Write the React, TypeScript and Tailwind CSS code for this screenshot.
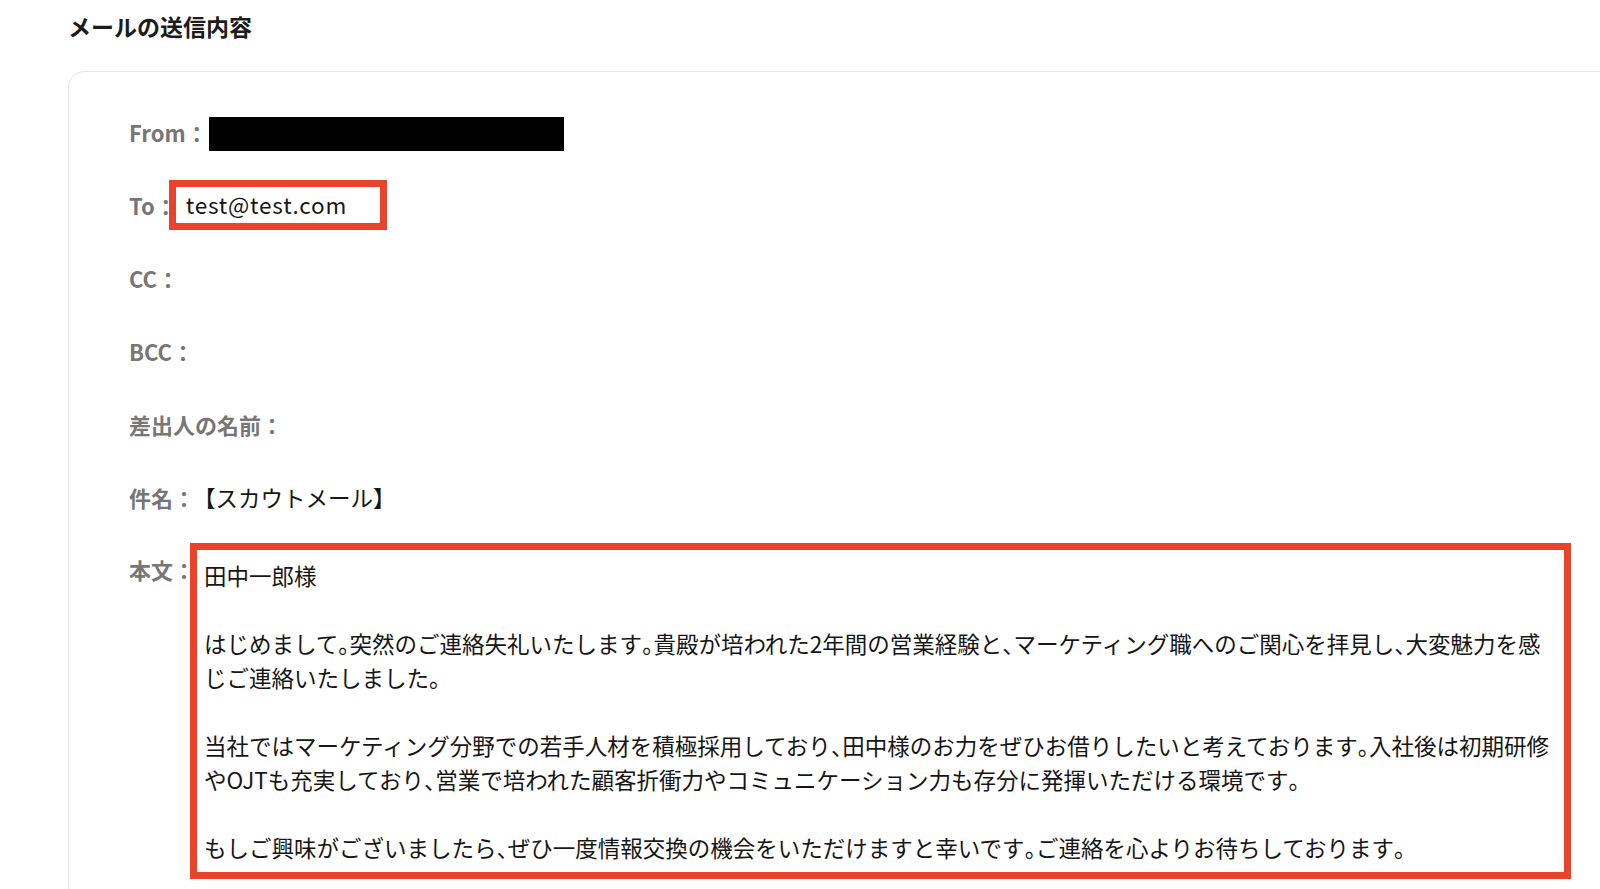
import React from "react";

function J({ t }: { t: string }) {
  const parts = t.split(/([。、])/);
  return (
    <>
      {parts.map((p, i) =>
        p === "。" || p === "、" ? (
          <span key={i} className="[font-feature-settings:'halt']">
            {p}
          </span>
        ) : (
          <React.Fragment key={i}>{p}</React.Fragment>
        )
      )}
    </>
  );
}

const labelCls =
  "text-[22px] leading-[34px] font-semibold text-[#767676] whitespace-nowrap";

export default function App() {
  return (
    <div className="h-[889px] w-full overflow-hidden bg-white pl-[68px] font-['Noto_Sans_CJK_JP','Noto_Sans',sans-serif]">
      <h2 className="pt-[10px] text-[23px] leading-[32px] font-semibold text-[#1c1c1c]">
        メールの送信内容
      </h2>
      <div className="mt-[29px] w-[1600px] h-[900px] rounded-[16px] border border-[#e4e4e4] pt-[23px] pl-[60px]">
        {/* From */}
        <div className="flex h-[73px] items-center">
          <span className={labelCls}>From：</span>
          <div className="ml-[1px] mt-[4px] h-[34px] w-[355px] bg-black" />
        </div>
        {/* To */}
        <div className="flex h-[73px] items-center">
          <span className={labelCls}>To：</span>
          <div className="ml-[-8px] flex h-[50px] w-[218px] items-center border-[7px] border-[#e9432b] pl-[10px] text-[22.5px] tracking-[0.8px] text-[#161616]">
            test@test.com
          </div>
        </div>
        {/* CC */}
        <div className="flex h-[73px] items-center">
          <span className={labelCls}>CC：</span>
        </div>
        {/* BCC */}
        <div className="flex h-[73px] items-center">
          <span className={labelCls}>BCC：</span>
        </div>
        {/* Sender name */}
        <div className="flex h-[73px] items-center">
          <span className={labelCls}>差出人の名前：</span>
        </div>
        {/* Subject */}
        <div className="flex h-[73px] items-center">
          <span className={labelCls}>件名：</span>
          <span className="ml-[-2px] text-[22.5px] leading-[34px] text-[#161616]">
            【スカウトメール】
          </span>
        </div>
        {/* Body */}
        <div className="flex items-start">
          <span className={labelCls + " mt-[19px]"}>本文：</span>
          <div className="ml-[-5px] mt-[10px] w-[1381px] border-[7px] border-[#e9432b] pt-[8px] pb-[8px] pl-[7px] text-[22.5px] leading-[34px] text-[#161616]">
            <div className="w-[1356px]">
              <p>田中一郎様</p>
              <p className="mt-[34px]">
                <J t="はじめまして。突然のご連絡失礼いたします。貴殿が培われた2年間の営業経験と、マーケティング職へのご関心を拝見し、大変魅力を感じご連絡いたしました。" />
              </p>
              <p className="mt-[34px]">
                <J t="当社ではマーケティング分野での若手人材を積極採用しており、田中様のお力をぜひお借りしたいと考えております。入社後は初期研修やOJTも充実しており、営業で培われた顧客折衝力やコミュニケーション力も存分に発揮いただける環境です。" />
              </p>
              <p className="mt-[34px]">
                <J t="もしご興味がございましたら、ぜひ一度情報交換の機会をいただけますと幸いです。ご連絡を心よりお待ちしております。" />
              </p>
            </div>
          </div>
        </div>
      </div>
    </div>
  );
}
